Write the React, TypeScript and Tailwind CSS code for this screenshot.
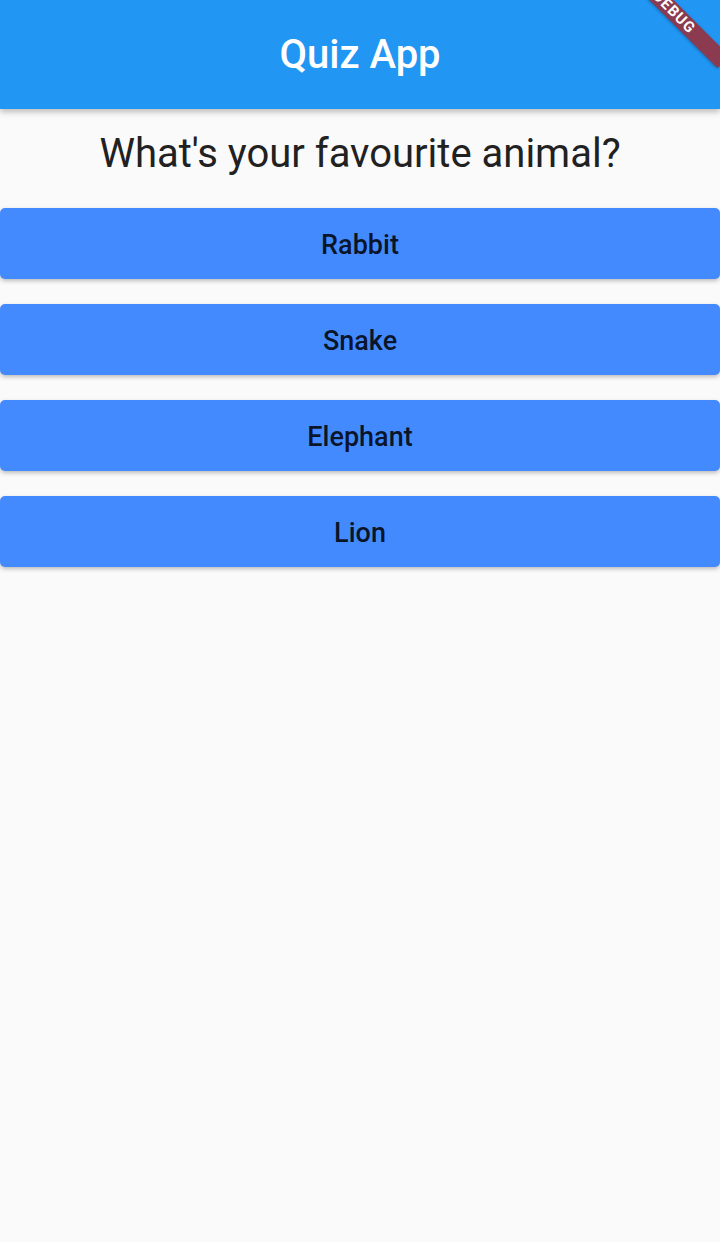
import React from 'react';

const answers = ['Rabbit', 'Snake', 'Elephant', 'Lion'];

export default function App() {
  return (
    <div className="relative min-h-[1242px] w-[720px] overflow-hidden bg-[#fafafa] font-['Roboto',sans-serif]">
      {/* app bar */}
      <header className="relative z-10 flex h-[109px] items-center justify-center bg-[#2196f3] shadow-[0_3px_6px_rgba(0,0,0,0.25)]">
        <h1 className="text-[40px] font-medium text-white">Quiz App</h1>
      </header>

      <div className="pt-[21px] pb-[30px] text-center text-[40px] leading-[48px] text-[#212121]">
        What's your favourite animal?
      </div>

      <div className="flex flex-col gap-[25px]">
        {answers.map((a) => (
          <button
            key={a}
            className="flex h-[71px] w-full items-center justify-center rounded-[5px] bg-[#448aff] pt-[3px] text-[27px] font-medium text-black/85 shadow-[0_2px_4px_rgba(0,0,0,0.25)]"
          >
            {a}
          </button>
        ))}
      </div>

      {/* debug banner */}
      <div className="absolute left-[604px] top-[4px] z-20 flex h-[17px] w-[140px] rotate-45 items-center justify-center bg-[#8b3a50] shadow-[0_1px_3px_rgba(0,0,0,0.3)]">
        <span className="text-[15px] font-bold leading-none tracking-[1px] text-white">DEBUG</span>
      </div>
    </div>
  );
}
